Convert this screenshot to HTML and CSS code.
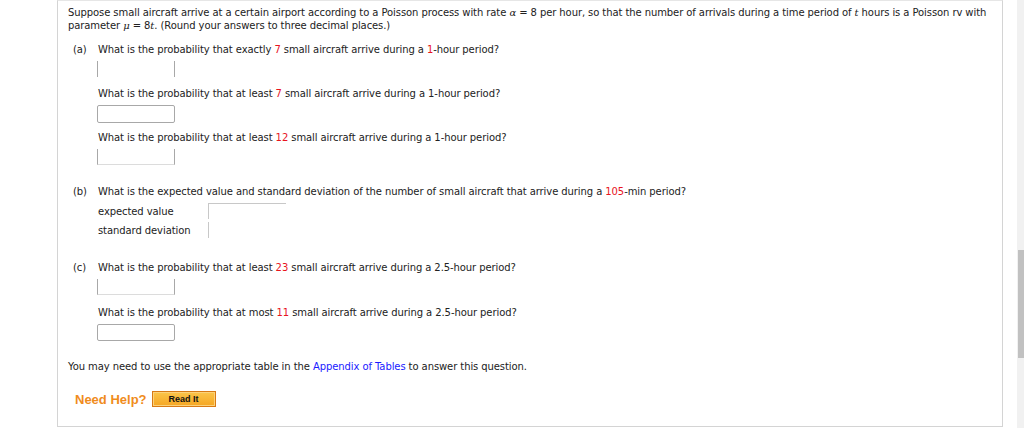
FILE: index.html
```html
<!DOCTYPE html>
<html>
<head>
<meta charset="utf-8">
<link rel="stylesheet" href="styles.css">
</head>
<body>
<div class="card">
  <p class="intro">Suppose small aircraft arrive at a certain airport according to a Poisson process with rate <i class="m">α</i> = 8 per hour, so that the number of arrivals during a time period of <i class="m">t</i> hours is a Poisson rv with<br>parameter <i class="m">μ</i> = 8<i class="m">t</i>. (Round your answers to three decimal places.)</p>

  <div class="part part-a">
    <span class="label">(a)</span>
    <div class="body">
      <p class="q">What is the probability that exactly <span class="red">7</span> small aircraft arrive during a <span class="red">1</span>-hour period?</p>
      <div class="box sides"></div>
      <p class="q q2">What is the probability that at least <span class="red">7</span> small aircraft arrive during a 1-hour period?</p>
      <div class="box full tall"></div>
      <p class="q q3">What is the probability that at least <span class="red">12</span> small aircraft arrive during a 1-hour period?</p>
      <div class="box sides bottom"></div>
    </div>
  </div>

  <div class="part part-b">
    <span class="label">(b)</span>
    <div class="body">
      <p class="q">What is the expected value and standard deviation of the number of small aircraft that arrive during a <span class="red">105</span>-min period?</p>
      <div class="pair">
        <span class="plabel">expected value</span>
        <div class="box lefttop"></div>
        <span class="plabel">standard deviation</span>
        <div class="box leftonly"></div>
      </div>
    </div>
  </div>

  <div class="part part-c">
    <span class="label">(c)</span>
    <div class="body">
      <p class="q">What is the probability that at least <span class="red">23</span> small aircraft arrive during a 2.5-hour period?</p>
      <div class="box sides bottom"></div>
      <p class="q q2c">What is the probability that at most <span class="red">11</span> small aircraft arrive during a 2.5-hour period?</p>
      <div class="box full"></div>
    </div>
  </div>

  <p class="note">You may need to use the appropriate table in the <a class="link">Appendix of Tables</a> to answer this question.</p>

  <div class="help">
    <span class="help-title">Need Help?</span>
    <span class="btn">Read It</span>
  </div>
</div>
<div class="scrollbar"><div class="thumb"></div></div>
</body>
</html>
```

FILE: styles.css
```css
html, body {
  margin: 0;
  padding: 0;
  background: #fff;
  overflow: hidden;
}
body {
  font-family: "DejaVu Sans", Verdana, sans-serif;
  font-size: 10px;
  letter-spacing: -0.085px;
  color: #222;
  width: 1024px;
  height: 428px;
  position: relative;
}
p { margin: 0; }
.card {
  margin-left: 57px;
  width: 946px;
  height: 427px;
  border: 1px solid #d4d4d4;
  border-top-color: #e6e6e6;
  box-sizing: border-box;
  padding: 5px 10px 0 10px;
}
.intro {
  line-height: 13px;
  white-space: nowrap;
}
.m { font-family: "DejaVu Serif", "Liberation Serif", serif; font-style: italic; }
.red { color: #e8141e; }
.part {
  display: flex;
  line-height: 13px;
}
.label {
  width: 30px;
  padding-left: 5px;
  box-sizing: border-box;
}
.body { flex: 1; }
.part-a { margin-top: 11px; }
.part-b { margin-top: 20px; }
.part-c { margin-top: 23px; }
.box {
  width: 78px;
  height: 16px;
  box-sizing: border-box;
  margin-top: 5px;
  margin-left: -1px;
}
.sides {
  border-left: 1px solid #a8a8a8;
  border-right: 1px solid #a8a8a8;
}
.bottom { border-bottom: 1px solid #dcdcdc; }
.full {
  border: 1px solid #a8a8a8;
  border-radius: 2px;
  height: 17px;
}
.tall { height: 18px; }
.q2 { margin-top: 10px; }
.q3 { margin-top: 8px; }
.q2c { margin-top: 11px; }
.pair {
  display: grid;
  grid-template-columns: 110px 78px;
  row-gap: 3px;
  margin-top: 5px;
  align-items: center;
}
.pair .box { margin: 0; }
.lefttop {
  border-left: 1px solid #c8c8c8;
  border-top: 1px solid #c8c8c8;
}
.leftonly { border-left: 1px solid #c8c8c8; }
.note {
  margin-top: 19px;
  line-height: 13px;
}
.link { color: #1a1aff; text-decoration: none; }
.help {
  display: flex;
  align-items: center;
  margin-top: 18px;
  margin-left: 7px;
  height: 16px;
}
.help-title {
  font-family: "Liberation Sans", Arial, sans-serif;
  font-weight: bold;
  font-size: 13px;
  letter-spacing: 0;
  color: #f08c1c;
}
.btn {
  margin-left: 5px;
  width: 64px;
  height: 16px;
  box-sizing: border-box;
  border: 1px solid #d87a14;
  box-shadow: inset 0 0 0 1px #fcd27a;
  background: linear-gradient(#fbc54a, #f5a623);
  font-family: "Liberation Sans", Arial, sans-serif;
  font-weight: bold;
  font-size: 9px;
  letter-spacing: 0;
  color: #111;
  display: flex;
  align-items: center;
  justify-content: center;
}
.scrollbar {
  position: absolute;
  right: 0;
  top: 0;
  width: 7px;
  height: 428px;
  background: #f1f1f1;
}
.thumb {
  position: absolute;
  left: 1px;
  right: 0;
  top: 250px;
  height: 108px;
  background: #c1c1c1;
}
```
